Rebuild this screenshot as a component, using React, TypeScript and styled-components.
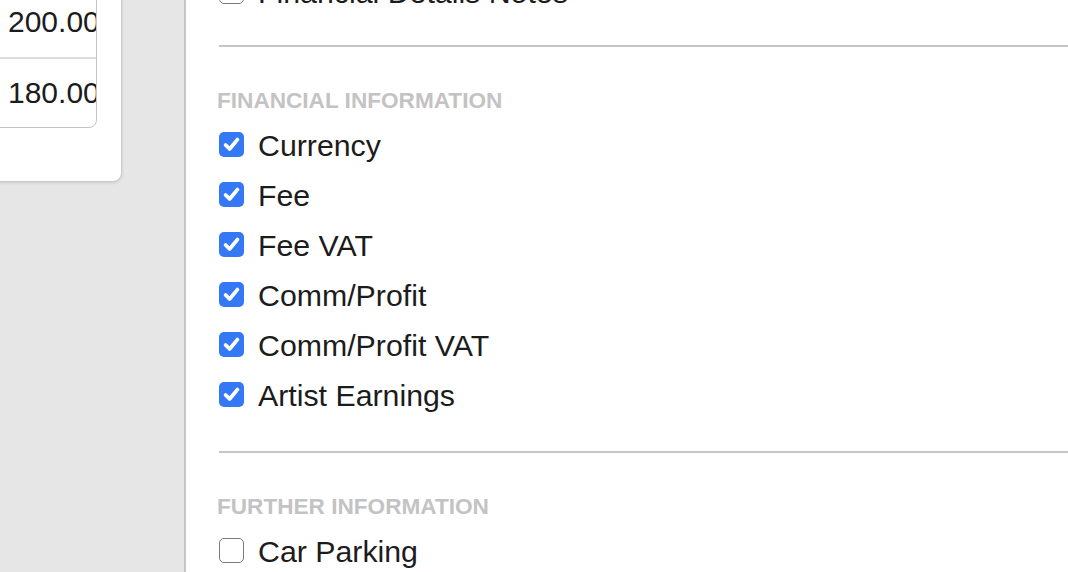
import React from "react";
import styled, { createGlobalStyle } from "styled-components";

const GlobalStyle = createGlobalStyle`
  html, body {
    margin: 0;
    padding: 0;
    height: 100%;
    overflow: hidden;
    background: #ffffff;
    font-family: "Liberation Sans", Arial, sans-serif;
  }
  * {
    box-sizing: border-box;
  }
`;

const Page = styled.div`
  display: grid;
  grid-template-columns: 186px 1fr;
  height: 100vh;
  overflow: hidden;
`;

/* left: list of fees, scrolled so only the tail shows */
const Sidebar = styled.aside`
  background: #e6e6e6;
  border-right: 2px solid #c6c6c6;
  overflow: hidden;
`;

const Card = styled.div`
  width: 322px;
  margin: -40px 0 0 -200px;
  padding: 25px 24px 53px 0;
  background: #ffffff;
  border: 1px solid #cbcbcb;
  border-radius: 9px;
  box-shadow: 0 1px 3px rgba(0, 0, 0, 0.12);
`;

const Table = styled.div`
  border: 1px solid #c4c4c4;
  border-radius: 8px;
  overflow: hidden;
`;

const TableRow = styled.div<{ $divided?: boolean }>`
  display: grid;
  grid-template-columns: 1fr 96px;
  height: 70px;
  border-top: ${(p) => (p.$divided ? "2px solid #dcdcdc" : "none")};
`;

const Cell = styled.div`
  display: flex;
  align-items: center;
  padding-left: 8px;
  font-size: 30px;
  color: #1c1c1c;
  white-space: nowrap;
  overflow: hidden;
`;

/* right: column visibility settings */
const Panel = styled.main`
  padding-left: 31px;
  overflow: hidden;
`;

const Scroller = styled.div`
  margin-top: -32px;
`;

const Divider = styled.hr<{ $tight?: boolean }>`
  height: 2px;
  margin: ${(p) => (p.$tight ? "27px" : "30px")} 0 0 2px;
  border: none;
  background: #c6c6c6;
`;

const Heading = styled.h3`
  margin: 41px 0 7px;
  font-size: 22.6px;
  line-height: 26px;
  font-weight: 700;
  color: #c3c3c3;
  text-transform: uppercase;
`;

const Row = styled.label`
  display: flex;
  align-items: center;
  gap: 14px;
  height: 50px;
  padding-left: 2px;
`;

const Box = styled.span<{ $checked: boolean }>`
  display: flex;
  align-items: center;
  justify-content: center;
  width: 25px;
  height: 25px;
  margin-bottom: 3px;
  border-radius: 5px;
  background: ${(p) => (p.$checked ? "#3478f6" : "#ffffff")};
  border: ${(p) => (p.$checked ? "none" : "1.5px solid #7a7a7a")};
  flex-shrink: 0;
`;

const Label = styled.span`
  font-size: 30.3px;
  color: #1c1c1c;
  white-space: nowrap;
`;

const Check = () => (
  <svg width="25" height="25" viewBox="0 0 25 25">
    <path
      d="M6.6 13 L10.6 17 L18.4 7.6"
      fill="none"
      stroke="#ffffff"
      strokeWidth="3.8"
      strokeLinecap="round"
      strokeLinejoin="round"
    />
  </svg>
);

type Item = { label: string; checked: boolean };

const Checkbox = ({ label, checked }: Item) => (
  <Row>
    <Box $checked={checked}>{checked && <Check />}</Box>
    <Label>{label}</Label>
  </Row>
);

const sections: { title: string; items: Item[] }[] = [
  {
    title: "Financial Information",
    items: [
      { label: "Currency", checked: true },
      { label: "Fee", checked: true },
      { label: "Fee VAT", checked: true },
      { label: "Comm/Profit", checked: true },
      { label: "Comm/Profit VAT", checked: true },
      { label: "Artist Earnings", checked: true },
    ],
  },
  {
    title: "Further Information",
    items: [
      { label: "Car Parking", checked: false },
      { label: "Catering", checked: false },
    ],
  },
];

const amounts = ["200.00", "180.00"];

export default function App() {
  return (
    <>
      <GlobalStyle />
      <Page>
        <Sidebar>
          <Card>
            <Table>
              {amounts.map((a, i) => (
                <TableRow key={a} $divided={i > 0}>
                  <Cell />
                  <Cell>{a}</Cell>
                </TableRow>
              ))}
            </Table>
          </Card>
        </Sidebar>
        <Panel>
          <Scroller>
            <Checkbox label="Financial Details Notes" checked={false} />
            {sections.map((s, i) => (
              <section key={s.title}>
                <Divider $tight={i === 0} />
                <Heading>{s.title}</Heading>
                {s.items.map((it) => (
                  <Checkbox key={it.label} {...it} />
                ))}
              </section>
            ))}
          </Scroller>
        </Panel>
      </Page>
    </>
  );
}
